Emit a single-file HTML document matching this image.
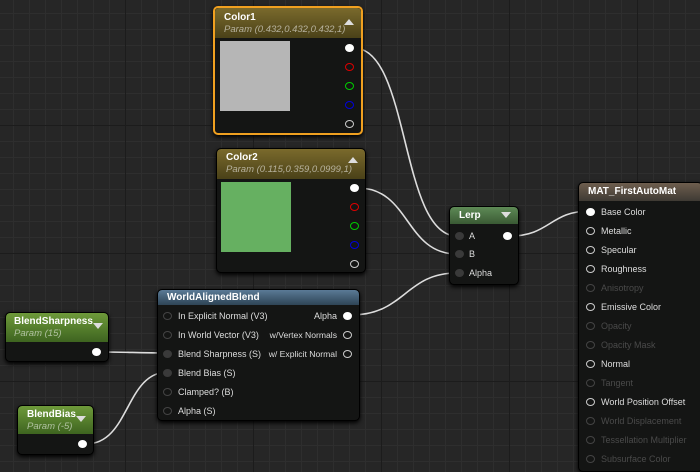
<!DOCTYPE html>
<html><head><meta charset="utf-8"><style>
*{margin:0;padding:0;box-sizing:border-box}
body{width:700px;height:465px;overflow:hidden;position:relative;font-family:"Liberation Sans",sans-serif;
background-color:#262626;
background-image:linear-gradient(#1c1c1c 1px,transparent 1px),linear-gradient(90deg,#1c1c1c 1px,transparent 1px),linear-gradient(#2e2e2e 1px,transparent 1px),linear-gradient(90deg,#2e2e2e 1px,transparent 1px);
background-size:128px 128px,128px 128px,16px 16px,16px 16px;background-position:-3px -3px,-3px -3px,-3px -3px,-3px -3px}
.n{position:absolute;background:#141514;border-radius:5px;box-shadow:0 2px 4px #000;border:1px solid #000;overflow:hidden}
.h{border-radius:4px 4px 0 0;color:#fff;font-size:10px;font-weight:bold;padding:3px 9px;position:relative}
.h i{display:block;font-style:italic;font-weight:normal;font-size:9.5px;opacity:.55;margin-top:1px}
.tri{position:absolute;right:7px;top:8px;width:0;height:0;border-left:5px solid transparent;border-right:5px solid transparent}
.up{border-bottom:6px solid #ddd}.dn{border-top:6px solid #ddd}
.t{position:absolute;font-size:9px;color:#ddd;white-space:nowrap}
.d{color:#4a4a4a}
.p{position:absolute;width:9px;height:8px;border-radius:50%;border:1.5px solid #ccc}
.f{background:#fff;border-color:#fff}
.g{background:#3a3a3a;border-color:#3a3a3a}
</style></head><body>
<svg width="700" height="465" style="position:absolute;left:0;top:0" fill="none" stroke="#ddd" stroke-width="1.6">
<path d="M354 48 C410 48 400 236 457 236"/>
<path d="M358 188 C410 188 405 254 457 254"/>
<path d="M351 315 C405 315 405 273 457 273"/>
<path d="M510 236 C550 236 550 211 590 211"/>
<path d="M100 352 C130 352 135 353 168 353"/>
<path d="M86 444 C130 444 125 372 168 372"/>
</svg>

<div class="n" style="left:213px;top:6px;width:150px;height:129px;border:2px solid #f0a020">
<div class="h" style="background:linear-gradient(#7a6a2c,#4a4118);height:30px;padding-top:4px">Color1<i>Param (0.432,0.432,0.432,1)</i><div class="tri up" style="top:11px"></div></div>
<div style="position:absolute;left:5px;top:33px;width:70px;height:70px;background:#b6b6b6"></div>
<div class="p f" style="left:130px;top:36px"></div>
<div class="p" style="left:130px;top:55px;border-color:#d00"></div>
<div class="p" style="left:130px;top:74px;border-color:#0c0"></div>
<div class="p" style="left:130px;top:93px;border-color:#00d"></div>
<div class="p" style="left:130px;top:112px;border-color:#ccc"></div>
</div>
<div class="n" style="left:216px;top:148px;width:150px;height:125px">
<div class="h" style="background:linear-gradient(#7a6a2c,#4a4118);height:30px">Color2<i>Param (0.115,0.359,0.0999,1)</i><div class="tri up"></div></div>
<div style="position:absolute;left:4px;top:33px;width:70px;height:70px;background:#66b061"></div>
<div class="p f" style="left:133px;top:35px"></div>
<div class="p" style="left:133px;top:54px;border-color:#d00"></div>
<div class="p" style="left:133px;top:73px;border-color:#0c0"></div>
<div class="p" style="left:133px;top:92px;border-color:#00d"></div>
<div class="p" style="left:133px;top:111px;border-color:#ccc"></div>
</div>
<div class="n" style="left:449px;top:206px;width:70px;height:79px">
<div class="h" style="background:linear-gradient(#5e8a56,#3a5a34);height:17px;padding-top:3px">Lerp<div class="tri dn" style="top:5px"></div></div>
<div class="p g" style="left:5px;top:25px"></div><div class="t" style="left:19px;top:24px">A</div>
<div class="p f" style="left:53px;top:25px"></div>
<div class="p g" style="left:5px;top:43px"></div><div class="t" style="left:19px;top:42px">B</div>
<div class="p g" style="left:5px;top:62px"></div><div class="t" style="left:19px;top:61px">Alpha</div>
</div>
<div class="n" style="left:578px;top:182px;width:125px;height:290px">
<div class="h" style="background:linear-gradient(#6e5e4e,#3e3a34);height:18px;padding-top:3px">MAT_FirstAutoMat</div>
<div class="p f" style="left:7px;top:25px"></div><div class="t" style="left:22px;top:24px">Base Color</div>
<div class="p" style="left:7px;top:44px"></div><div class="t" style="left:22px;top:43px">Metallic</div>
<div class="p" style="left:7px;top:63px"></div><div class="t" style="left:22px;top:62px">Specular</div>
<div class="p" style="left:7px;top:82px"></div><div class="t" style="left:22px;top:81px">Roughness</div>
<div class="p" style="left:7px;top:101px;border-color:#444"></div><div class="t d" style="left:22px;top:100px">Anisotropy</div>
<div class="p" style="left:7px;top:120px"></div><div class="t" style="left:22px;top:119px">Emissive Color</div>
<div class="p" style="left:7px;top:139px;border-color:#444"></div><div class="t d" style="left:22px;top:138px">Opacity</div>
<div class="p" style="left:7px;top:158px;border-color:#444"></div><div class="t d" style="left:22px;top:157px">Opacity Mask</div>
<div class="p" style="left:7px;top:177px"></div><div class="t" style="left:22px;top:176px">Normal</div>
<div class="p" style="left:7px;top:196px;border-color:#444"></div><div class="t d" style="left:22px;top:195px">Tangent</div>
<div class="p" style="left:7px;top:215px"></div><div class="t" style="left:22px;top:214px">World Position Offset</div>
<div class="p" style="left:7px;top:234px;border-color:#444"></div><div class="t d" style="left:22px;top:233px">World Displacement</div>
<div class="p" style="left:7px;top:253px;border-color:#444"></div><div class="t d" style="left:22px;top:252px">Tessellation Multiplier</div>
<div class="p" style="left:7px;top:272px;border-color:#444"></div><div class="t d" style="left:22px;top:271px">Subsurface Color</div>
</div>
<div class="n" style="left:157px;top:289px;width:203px;height:132px">
<div class="h" style="background:linear-gradient(#5a7a96,#2e4456);height:15px;padding-top:2px">WorldAlignedBlend</div>
<div class="p" style="left:5px;top:22px;border-color:#444"></div><div class="t" style="left:20px;top:21px">In Explicit Normal (V3)</div>
<div class="p" style="left:5px;top:41px;border-color:#444"></div><div class="t" style="left:20px;top:40px">In World Vector (V3)</div>
<div class="p g" style="left:5px;top:60px"></div><div class="t" style="left:20px;top:59px">Blend Sharpness (S)</div>
<div class="p g" style="left:5px;top:79px"></div><div class="t" style="left:20px;top:78px">Blend Bias (S)</div>
<div class="p" style="left:5px;top:98px;border-color:#444"></div><div class="t" style="left:20px;top:97px">Clamped? (B)</div>
<div class="p" style="left:5px;top:117px;border-color:#444"></div><div class="t" style="left:20px;top:116px">Alpha (S)</div>
<div class="t" style="right:22px;top:21px">Alpha</div><div class="p f" style="left:185px;top:22px"></div>
<div class="t" style="right:22px;top:40px;font-size:8.6px">w/Vertex Normals</div><div class="p" style="left:185px;top:41px"></div>
<div class="t" style="right:22px;top:59px;font-size:8.6px">w/ Explicit Normal</div><div class="p" style="left:185px;top:60px"></div>
</div>
<div class="n" style="left:5px;top:312px;width:104px;height:50px">
<div class="h" style="background:linear-gradient(#6e9a3a,#3e6420);height:29px;padding-left:8px">BlendSharpness<i>Param (15)</i><div class="tri dn" style="top:10px;right:5px"></div></div>
<div class="p f" style="left:86px;top:35px"></div>
</div>
<div class="n" style="left:17px;top:405px;width:77px;height:50px">
<div class="h" style="background:linear-gradient(#6e9a3a,#3e6420);height:28px">BlendBias<i>Param (-5)</i><div class="tri dn" style="top:10px"></div></div>
<div class="p f" style="left:60px;top:34px"></div>
</div>
</body></html>
